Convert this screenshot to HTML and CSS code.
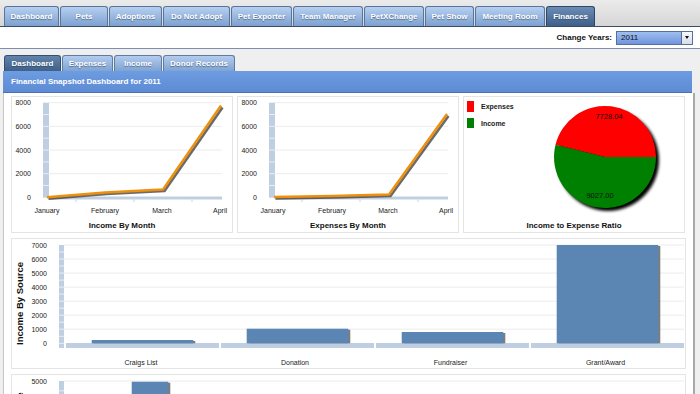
FILE: index.html
```html
<!DOCTYPE html>
<html>
<head>
<meta charset="utf-8">
<title>Finances</title>
<link rel="stylesheet" href="styles.css">
</head>
<body>
<div class="topbar">
  <div class="tab t1">Dashboard</div>
  <div class="tab t2">Pets</div>
  <div class="tab t3">Adoptions</div>
  <div class="tab t4">Do Not Adopt</div>
  <div class="tab t5">Pet Exporter</div>
  <div class="tab t6">Team Manager</div>
  <div class="tab t7">PetXChange</div>
  <div class="tab t8">Pet Show</div>
  <div class="tab t9">Meeting Room</div>
  <div class="tab t10 active">Finances</div>
</div>
<div class="yearbar">
  <span class="ylabel">Change Years:</span>
  <div class="select"><span class="sval">2011</span><span class="arrow"></span></div>
</div>
<div class="main">
  <div class="subtabs">
    <div class="subtab s1 active">Dashboard</div>
    <div class="subtab s2">Expenses</div>
    <div class="subtab s3">Income</div>
    <div class="subtab s4">Donor Records</div>
  </div>
  <div class="panel-head">Financial Snapshot Dashboard for 2011</div>
  <div class="panel-body">
    <div class="row">
      <div class="card">
        <svg width="222" height="137" viewBox="0 0 222 137">
          <g class="grid">
            <line x1="38" y1="6.7" x2="211" y2="6.7"/>
            <line x1="38" y1="30.4" x2="211" y2="30.4"/>
            <line x1="38" y1="54.1" x2="211" y2="54.1"/>
            <line x1="38" y1="77.7" x2="211" y2="77.7"/>
          </g>
          <g class="ax" text-anchor="end">
            <text x="20" y="9.2">8000</text>
            <text x="20" y="32.9">6000</text>
            <text x="20" y="56.6">4000</text>
            <text x="20" y="80.2">2000</text>
            <text x="20" y="103.8">0</text>
          </g>
          <rect class="band" x="32" y="6.7" width="6" height="95"/>
          <g class="bandln">
            <line x1="32" y1="18.5" x2="38" y2="18.5"/><line x1="32" y1="30.4" x2="38" y2="30.4"/>
            <line x1="32" y1="42.2" x2="38" y2="42.2"/><line x1="32" y1="54.1" x2="38" y2="54.1"/>
            <line x1="32" y1="65.9" x2="38" y2="65.9"/><line x1="32" y1="77.7" x2="38" y2="77.7"/>
            <line x1="32" y1="89.5" x2="38" y2="89.5"/>
          </g>
          <rect class="band" x="38" y="100.5" width="173" height="3"/>
          <g class="tick"><line x1="65" y1="103.5" x2="65" y2="106"/><line x1="123" y1="103.5" x2="123" y2="106"/><line x1="181" y1="103.5" x2="181" y2="106"/></g>
          <polyline class="lshadow" points="37.5,102.8 95.5,98 153.5,95 211.5,11.5"/>
          <polyline class="line" points="36,101.3 94,96.5 152,93.5 210,9.5"/>
          <g class="ax" text-anchor="middle">
            <text x="36" y="116.5">January</text>
            <text x="94" y="116.5">February</text>
            <text x="151" y="116.5">March</text>
            <text x="209" y="116.5">April</text>
          </g>
          <text class="ttl" x="111" y="132" text-anchor="middle">Income By Month</text>
        </svg>
      </div>
      <div class="card">
        <svg width="222" height="137" viewBox="0 0 222 137">
          <g class="grid">
            <line x1="38" y1="6.7" x2="211" y2="6.7"/>
            <line x1="38" y1="30.4" x2="211" y2="30.4"/>
            <line x1="38" y1="54.1" x2="211" y2="54.1"/>
            <line x1="38" y1="77.7" x2="211" y2="77.7"/>
          </g>
          <g class="ax" text-anchor="end">
            <text x="20" y="9.2">8000</text>
            <text x="20" y="32.9">6000</text>
            <text x="20" y="56.6">4000</text>
            <text x="20" y="80.2">2000</text>
            <text x="20" y="103.8">0</text>
          </g>
          <rect class="band" x="32" y="6.7" width="6" height="95"/>
          <g class="bandln">
            <line x1="32" y1="18.5" x2="38" y2="18.5"/><line x1="32" y1="30.4" x2="38" y2="30.4"/>
            <line x1="32" y1="42.2" x2="38" y2="42.2"/><line x1="32" y1="54.1" x2="38" y2="54.1"/>
            <line x1="32" y1="65.9" x2="38" y2="65.9"/><line x1="32" y1="77.7" x2="38" y2="77.7"/>
            <line x1="32" y1="89.5" x2="38" y2="89.5"/>
          </g>
          <rect class="band" x="38" y="100.5" width="173" height="3"/>
          <g class="tick"><line x1="65" y1="103.5" x2="65" y2="106"/><line x1="123" y1="103.5" x2="123" y2="106"/><line x1="181" y1="103.5" x2="181" y2="106"/></g>
          <polyline class="lshadow" points="38.5,102.5 96.5,101.5 153.5,100 211.5,20"/>
          <polyline class="line" points="37,101 95,100 152,98.5 210,18"/>
          <g class="ax" text-anchor="middle">
            <text x="36" y="116.5">January</text>
            <text x="95" y="116.5">February</text>
            <text x="151" y="116.5">March</text>
            <text x="209" y="116.5">April</text>
          </g>
          <text class="ttl" x="111" y="132" text-anchor="middle">Expenses By Month</text>
        </svg>
      </div>
      <div class="card">
        <svg width="222" height="137" viewBox="0 0 222 137">
          <defs>
            <filter id="pieshadow" x="-30%" y="-30%" width="160%" height="160%">
              <feGaussianBlur stdDeviation="1.6"/>
            </filter>
          </defs>
          <rect x="4" y="5" width="7" height="11" fill="#ff0000"/>
          <rect x="4" y="22" width="7" height="10" fill="#008000"/>
          <text class="leg" x="18" y="12.5">Expenses</text>
          <text class="leg" x="18" y="29.8">Income</text>
          <circle cx="145" cy="64" r="51" fill="#000" filter="url(#pieshadow)"/>
          <path d="M142 61 L193 61 A51 51 0 0 0 92.5 48.7 Z" fill="#ff0000"/>
          <path d="M142 61 L92.5 48.7 A51 51 0 1 0 193 61 Z" fill="#008000"/>
          <text class="pl" x="146" y="23.3" text-anchor="middle">7728.04</text>
          <text class="pl" x="137" y="102.3" text-anchor="middle">9027.00</text>
          <text class="ttl" x="111" y="132" text-anchor="middle">Income to Expense Ratio</text>
        </svg>
      </div>
    </div>
    <div class="card wide">
      <svg width="675" height="131" viewBox="0 0 675 131">
        <g class="grid">
          <line x1="53" y1="7" x2="673" y2="7"/><line x1="53" y1="21" x2="673" y2="21"/>
          <line x1="53" y1="35.1" x2="673" y2="35.1"/><line x1="53" y1="49.1" x2="673" y2="49.1"/>
          <line x1="53" y1="63.2" x2="673" y2="63.2"/><line x1="53" y1="77.2" x2="673" y2="77.2"/>
          <line x1="53" y1="91.2" x2="673" y2="91.2"/>
        </g>
        <g class="ax" text-anchor="end">
          <text x="36" y="9.5">7000</text><text x="36" y="23.5">6000</text>
          <text x="36" y="37.6">5000</text><text x="36" y="51.6">4000</text>
          <text x="36" y="65.7">3000</text><text x="36" y="79.7">2000</text>
          <text x="36" y="93.7">1000</text><text x="36" y="107.8">0</text>
        </g>
        <rect class="band" x="48" y="7" width="5" height="103"/>
        <g class="bandln">
          <line x1="48" y1="14" x2="53" y2="14"/><line x1="48" y1="21" x2="53" y2="21"/>
          <line x1="48" y1="28" x2="53" y2="28"/><line x1="48" y1="35.1" x2="53" y2="35.1"/>
          <line x1="48" y1="42.1" x2="53" y2="42.1"/><line x1="48" y1="49.1" x2="53" y2="49.1"/>
          <line x1="48" y1="56.1" x2="53" y2="56.1"/><line x1="48" y1="63.2" x2="53" y2="63.2"/>
          <line x1="48" y1="70.2" x2="53" y2="70.2"/><line x1="48" y1="77.2" x2="53" y2="77.2"/>
          <line x1="48" y1="84.2" x2="53" y2="84.2"/><line x1="48" y1="91.2" x2="53" y2="91.2"/>
          <line x1="48" y1="98.3" x2="53" y2="98.3"/><line x1="48" y1="105.3" x2="53" y2="105.3"/>
        </g>
        <rect class="band" x="55" y="105" width="153" height="5"/>
        <rect class="band" x="210" y="105" width="153" height="5"/>
        <rect class="band" x="365" y="105" width="153" height="5"/>
        <rect class="band" x="520" y="105" width="153" height="5"/>
        <rect class="bshadow" x="82.7" y="103" width="101.6" height="2.3"/>
        <rect class="bar" x="80.7" y="102" width="101.6" height="3.3"/>
        <rect class="bshadow" x="237.7" y="91.7" width="101.6" height="13.6"/>
        <rect class="bar" x="235.7" y="90.7" width="101.6" height="14.6"/>
        <rect class="bshadow" x="392.7" y="95" width="101.6" height="10.3"/>
        <rect class="bar" x="390.7" y="94" width="101.6" height="11.3"/>
        <rect class="bshadow" x="547.7" y="8" width="101.6" height="97.3"/>
        <rect class="bar" x="545.7" y="7" width="101.6" height="98.3"/>
        <g class="ax" text-anchor="middle">
          <text x="130" y="126.5">Craigs List</text>
          <text x="284" y="126.5">Donation</text>
          <text x="439.5" y="126.5">Fundraiser</text>
          <text x="594.5" y="126.5">Grant/Award</text>
        </g>
        <text class="vttl" transform="translate(12 65.5) rotate(-90)" text-anchor="middle">Income By Source</text>
      </svg>
    </div>
    <div class="card wide">
      <svg width="675" height="131" viewBox="0 0 675 131">
        <g class="grid">
          <line x1="53" y1="7" x2="673" y2="7"/><line x1="53" y1="26.6" x2="673" y2="26.6"/>
          <line x1="53" y1="46.3" x2="673" y2="46.3"/><line x1="53" y1="65.9" x2="673" y2="65.9"/>
          <line x1="53" y1="85.6" x2="673" y2="85.6"/>
        </g>
        <g class="ax" text-anchor="end">
          <text x="36" y="9.5">5000</text><text x="36" y="29.1">4000</text>
          <text x="36" y="48.8">3000</text><text x="36" y="68.4">2000</text>
          <text x="36" y="88.1">1000</text><text x="36" y="107.8">0</text>
        </g>
        <rect class="band" x="48" y="7" width="5" height="103"/>
        <g class="bandln">
          <line x1="48" y1="16.8" x2="53" y2="16.8"/><line x1="48" y1="26.6" x2="53" y2="26.6"/>
          <line x1="48" y1="36.5" x2="53" y2="36.5"/><line x1="48" y1="46.3" x2="53" y2="46.3"/>
          <line x1="48" y1="56.1" x2="53" y2="56.1"/><line x1="48" y1="65.9" x2="53" y2="65.9"/>
          <line x1="48" y1="75.8" x2="53" y2="75.8"/><line x1="48" y1="85.6" x2="53" y2="85.6"/>
          <line x1="48" y1="95.4" x2="53" y2="95.4"/>
        </g>
        <rect class="bshadow" x="122.7" y="8.7" width="36.6" height="96.6"/>
        <rect class="bar" x="120.7" y="7.7" width="36.6" height="97.6"/>
        <text class="vttl" transform="translate(12 65.5) rotate(-90)" text-anchor="middle">Expenses By Source</text>
      </svg>
    </div>
  </div>
</div>
</body>
</html>
```
FILE: styles.css
```css
* { box-sizing: border-box; }
html, body { margin: 0; padding: 0; }
body {
  width: 700px;
  height: 394px;
  overflow: hidden;
  background: #efefef;
  font-family: "Liberation Sans", Arial, sans-serif;
  font-size: 8px;
  color: #111;
}

/* top navigation */
.topbar {
  height: 27px;
  background: linear-gradient(#ebebeb, #d6d6d6);
  border-bottom: 1px solid #3b4d63;
  display: flex;
  align-items: flex-end;
  gap: 1px;
  padding-left: 4px;
}
.tab {
  height: 20px;
  border: 1px solid #56769e;
  border-bottom: 0;
  border-radius: 3px 3px 0 0;
  background: linear-gradient(#b6cfef, #7da1d1);
  color: #fff;
  font-weight: bold;
  font-size: 8px;
  display: flex;
  align-items: center;
  justify-content: center;
  text-shadow: 0 1px 1px rgba(30, 50, 80, 0.55);
  white-space: nowrap;
}
.tab.active {
  background: linear-gradient(#6b8db5, #3e6088);
  border-color: #2f4866;
}
.t1 { width: 55px; }
.t2 { width: 48px; }
.t3 { width: 53px; }
.t4 { width: 67px; }
.t5 { width: 61px; }
.t6 { width: 70px; }
.t7 { width: 60px; }
.t8 { width: 49px; }
.t9 { width: 70px; }
.t10 { width: 49px; }

/* year selector strip */
.yearbar {
  height: 22px;
  background: #fff;
  border-bottom: 1px solid #7c8eb1;
  display: flex;
  justify-content: flex-end;
  align-items: center;
  gap: 4px;
  padding-right: 7px;
}
.ylabel { font-weight: bold; color: #111; }
.select {
  width: 77px;
  height: 14px;
  border: 1px solid #55709d;
  background: linear-gradient(#a0bef0, #6e94dc);
  display: flex;
  align-items: stretch;
}
.sval { padding-left: 4px; line-height: 12px; color: #111; font-size: 8px; }
.arrow {
  margin-left: auto;
  width: 11px;
  background: linear-gradient(#f6f8fb, #d7deea);
  border-left: 1px solid #55709d;
  display: flex;
  align-items: center;
  justify-content: center;
}
.arrow::after {
  content: "";
  border-left: 2.5px solid transparent;
  border-right: 2.5px solid transparent;
  border-top: 3px solid #111;
}

/* main content */
.main { padding: 6px 4px 0 3px; }
.subtabs {
  display: flex;
  gap: 1px;
  padding-left: 1px;
  height: 16px;
}
.subtab {
  height: 16px;
  border: 1px solid #5c7ca3;
  border-bottom: 0;
  border-radius: 3px 3px 0 0;
  background: linear-gradient(#b3ccee, #7fa3d2);
  color: #fff;
  font-weight: bold;
  font-size: 8px;
  display: flex;
  align-items: center;
  justify-content: center;
  text-shadow: 0 1px 1px rgba(30, 50, 80, 0.55);
}
.subtab.active {
  background: linear-gradient(#6283ab, #3f6189);
  border-color: #34506f;
}
.s1 { width: 57px; }
.s2 { width: 51px; }
.s3 { width: 48px; }
.s4 { width: 72px; }

.panel-head {
  height: 22px;
  margin-right: 4px;
  background: linear-gradient(#6e9ce1, #5d8bd5);
  border-bottom: 1px solid #4a71b0;
  color: #fff;
  font-weight: bold;
  font-size: 8px;
  line-height: 21px;
  padding-left: 8px;
}
.panel-body {
  background: #fff;
  border-left: 1px solid #c6c6c6;
  border-right: 2px solid #a8a8a8;
  margin-right: 1px;
  padding: 3px 0 0 7px;
  height: 320px;
  display: flex;
  flex-direction: column;
  gap: 5px;
}
.row {
  display: grid;
  grid-template-columns: 222px 222px 222px;
  gap: 4px;
}
.card {
  background: #fff;
  box-shadow: inset 0 0 0 1px #e4e4e4;
  height: 137px;
}
.card.wide { width: 675px; height: 131px; }
.card svg { display: block; }

/* chart pieces */
.grid line { stroke: #ececec; stroke-width: 1; }
.ax { font-family: "Liberation Sans", Arial, sans-serif; font-size: 7px; fill: #222; }
.ttl { font-family: "Liberation Sans", Arial, sans-serif; font-size: 8px; font-weight: bold; fill: #111; }
.vttl { font-family: "Liberation Sans", Arial, sans-serif; font-size: 9.5px; font-weight: bold; fill: #111; }
.leg { font-family: "Liberation Sans", Arial, sans-serif; font-size: 7px; font-weight: bold; fill: #222; }
.pl { font-family: "Liberation Sans", Arial, sans-serif; font-size: 7.5px; fill: #111; }
.band { fill: #bfcfe1; }
.bandln line { stroke: #e6edf5; stroke-width: 1; }
.tick line { stroke: #c5d3e3; stroke-width: 1; }
.line { fill: none; stroke: #ee900c; stroke-width: 2.4; stroke-linejoin: round; }
.lshadow { fill: none; stroke: #3a3a3a; stroke-width: 2.6; stroke-linejoin: round; opacity: 0.75; }
.bar { fill: #5b86b4; }
.bshadow { fill: #7d7d7d; }
```
